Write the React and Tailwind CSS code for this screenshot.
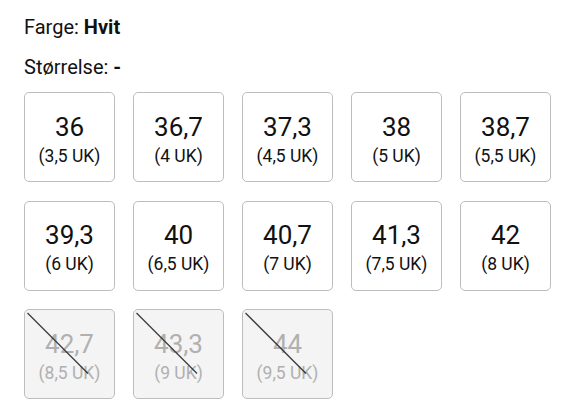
import React from "react";

const sizes = [
    { eu: "36", uk: "3,5 UK" },
    { eu: "36,7", uk: "4 UK" },
    { eu: "37,3", uk: "4,5 UK" },
    { eu: "38", uk: "5 UK" },
    { eu: "38,7", uk: "5,5 UK" },
    { eu: "39,3", uk: "6 UK" },
    { eu: "40", uk: "6,5 UK" },
    { eu: "40,7", uk: "7 UK" },
    { eu: "41,3", uk: "7,5 UK" },
    { eu: "42", uk: "8 UK" },
    { eu: "42,7", uk: "8,5 UK", soldOut: true },
    { eu: "43,3", uk: "9 UK", soldOut: true },
    { eu: "44", uk: "9,5 UK", soldOut: true },
];

const SizeBox = ({ eu, uk, soldOut }) => {
    return (
        <div
            className={
                "relative w-[91px] h-[90px] rounded-[5px] border border-[#bdbdbd] flex flex-col items-center justify-center pt-[4px] overflow-hidden " +
                (soldOut ? "bg-[#f4f4f4] text-[#b0b0b0]" : "bg-white text-[#111]")
            }
        >
            <span className="text-[26px] leading-[30px]">{eu}</span>
            <span className="text-[17.5px] leading-[21px] mt-[4px]">({uk})</span>
            {soldOut && (
                <svg className="absolute left-0 top-0" width="91" height="90">
                    <line x1="2.5" y1="3" x2="63" y2="63.5" stroke="#3a3a3a" strokeWidth="1.3" />
                </svg>
            )}
        </div>
    );
};

export default function App() {
    return (
        <div className="bg-white w-[575px] h-[416px] px-6 pt-[15px] text-[#111]" style={{ fontFamily: "Roboto, sans-serif" }}>
            <p className="text-[20px] leading-[24px]">
                Farge: <span className="font-bold">Hvit</span>
            </p>
            <p className="text-[20px] leading-[24px] mt-[15.5px]">
                Størrelse: <span className="font-bold">-</span>
            </p>

            {/* size grid */}
            <div className="grid grid-cols-[repeat(5,91px)] gap-x-[18px] gap-y-[18.5px] mt-[13.5px]">
                {sizes.map((s) => (
                    <SizeBox key={s.eu} {...s} />
                ))}
            </div>
        </div>
    );
}
